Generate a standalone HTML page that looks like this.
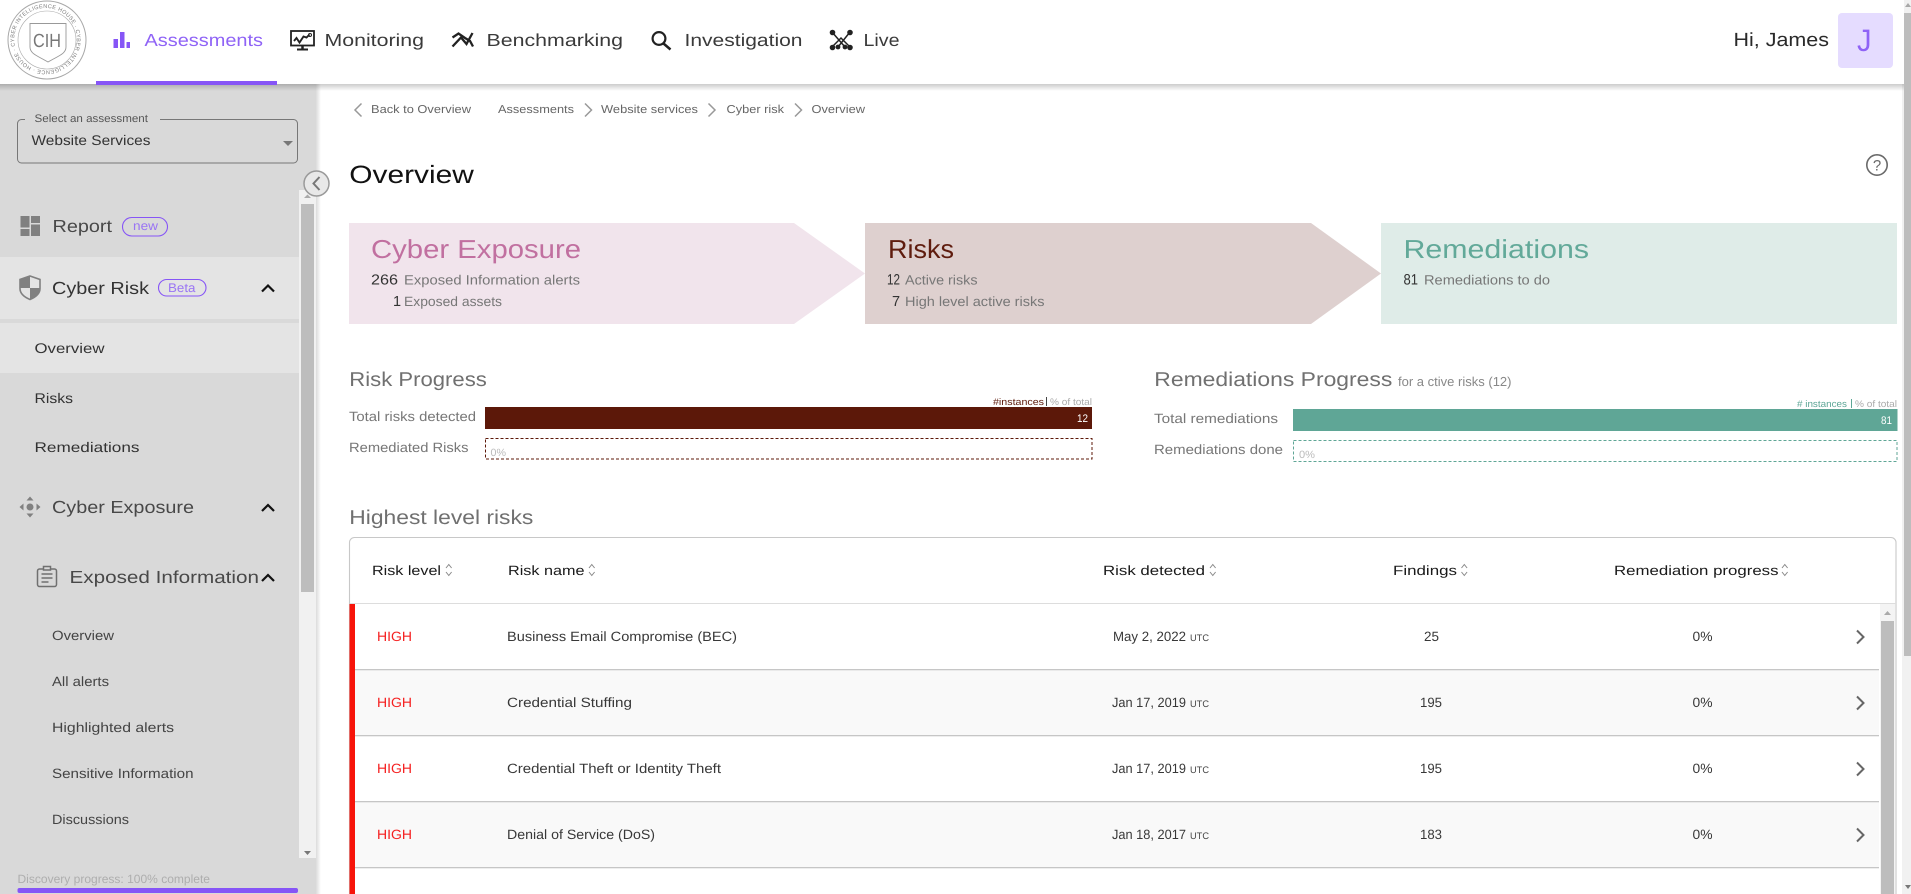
<!DOCTYPE html>
<html lang="en">
<head>
<meta charset="utf-8">
<title>Overview</title>
<style>
html,body{margin:0;padding:0;width:1911px;height:894px;overflow:hidden;background:#fff}
svg{display:block}
text{font-family:"Liberation Sans",Arial,sans-serif;text-rendering:geometricPrecision}
</style>
</head>
<body>
<svg xmlns="http://www.w3.org/2000/svg" width="1911" height="894" viewBox="0 0 1911 894">
<defs>
<linearGradient id="sh" x1="0" y1="0" x2="0" y2="1"><stop offset="0" stop-color="#000" stop-opacity=".2"/><stop offset="1" stop-color="#000" stop-opacity="0"/></linearGradient>
<linearGradient id="sr" x1="0" y1="0" x2="1" y2="0"><stop offset="0" stop-color="#000" stop-opacity=".14"/><stop offset="1" stop-color="#000" stop-opacity="0"/></linearGradient>
<path id="ring" d="M31.500 67.200A31.300 31.300 0 1 1 31.520 67.210"/>
</defs>

<!-- page scrollbar -->
<rect x="1902" y="0" width="9" height="894" fill="#f1f1f1"/>
<rect x="1904" y="13" width="7" height="643" fill="#bdbdbd"/>
<path d="M1905 7l3-4 3 4z" fill="#a8a8a8"/>
<path d="M1905 885l3 4 3-4z" fill="#777"/>

<!-- main cards -->
<path d="M349 223H794L865 273.500 794 324H349z" fill="#f1e4ec"/>
<path d="M865 223H1311L1381 273.500 1311 324H865z" fill="#ded0cf"/>
<rect x="1381" y="223" width="516" height="101" fill="#dfece8"/>

<!-- breadcrumbs -->
<g fill="none" stroke="#999" stroke-width="1.500">
<path d="M361.500 103.500L355 110l6.500 6.500"/>
<path d="M585 103.500L591.500 110 585 116.500"/>
<path d="M708.500 103.500L715 110 708.500 116.500"/>
<path d="M795 103.500L801.500 110 795 116.500"/>
</g>
<g font-size="11.500" fill="#666">
<text x="371" y="113" textLength="100" lengthAdjust="spacingAndGlyphs">Back to Overview</text>
<text x="498" y="113" textLength="76" lengthAdjust="spacingAndGlyphs">Assessments</text>
<text x="601" y="113" textLength="97" lengthAdjust="spacingAndGlyphs">Website services</text>
<text x="726.500" y="113" textLength="57.500" lengthAdjust="spacingAndGlyphs">Cyber risk</text>
<text x="811.500" y="113" textLength="53.500" lengthAdjust="spacingAndGlyphs">Overview</text>
</g>

<text x="349.300" y="183" font-size="25" fill="#111" textLength="124.500" lengthAdjust="spacingAndGlyphs">Overview</text>

<!-- help -->
<circle cx="1877" cy="165" r="10.200" fill="none" stroke="#6a6a6a" stroke-width="1.600"/>
<text x="1877" y="170.500" font-size="15" fill="#6a6a6a" text-anchor="middle">?</text>

<!-- card text -->
<text x="371" y="258" font-size="26" fill="#c170a0" textLength="210" lengthAdjust="spacingAndGlyphs">Cyber Exposure</text>
<text x="371" y="284.500" font-size="14.500" fill="#333" textLength="27" lengthAdjust="spacingAndGlyphs">266</text>
<text x="404" y="284.500" font-size="13.500" fill="#777" textLength="176" lengthAdjust="spacingAndGlyphs">Exposed Information alerts</text>
<text x="393" y="306" font-size="14.500" fill="#333">1</text>
<text x="404" y="306" font-size="13.500" fill="#777" textLength="98" lengthAdjust="spacingAndGlyphs">Exposed assets</text>

<text x="888" y="258" font-size="26" fill="#5f1c0e" textLength="66" lengthAdjust="spacingAndGlyphs">Risks</text>
<text x="887" y="284.500" font-size="15" fill="#333" textLength="13" lengthAdjust="spacingAndGlyphs">12</text>
<text x="905" y="284.500" font-size="13.500" fill="#777" textLength="72.500" lengthAdjust="spacingAndGlyphs">Active risks</text>
<text x="892" y="306" font-size="14.500" fill="#333">7</text>
<text x="905" y="306" font-size="13.500" fill="#777" textLength="139.500" lengthAdjust="spacingAndGlyphs">High level active risks</text>

<text x="1403.500" y="258" font-size="26" fill="#62a999" textLength="185.500" lengthAdjust="spacingAndGlyphs">Remediations</text>
<text x="1403.500" y="284.500" font-size="15" fill="#333" textLength="14.500" lengthAdjust="spacingAndGlyphs">81</text>
<text x="1424" y="284.500" font-size="13.500" fill="#777" textLength="126" lengthAdjust="spacingAndGlyphs">Remediations to do</text>

<!-- Risk progress -->
<text x="349.300" y="386" font-size="20" fill="#707070" textLength="137.500" lengthAdjust="spacingAndGlyphs">Risk Progress</text>
<text x="993" y="405" font-size="9.500" fill="#5c1809" textLength="51" lengthAdjust="spacingAndGlyphs">#instances</text>
<rect x="1046" y="397" width="1" height="9" fill="#444"/>
<text x="1050" y="405" font-size="9.500" fill="#aaa" textLength="42" lengthAdjust="spacingAndGlyphs">% of total</text>
<rect x="485" y="407" width="607" height="22" fill="#5c1809"/>
<text x="1077" y="422" font-size="11" fill="#fff" textLength="11" lengthAdjust="spacingAndGlyphs">12</text>
<text x="349" y="421" font-size="13.500" fill="#777" textLength="127" lengthAdjust="spacingAndGlyphs">Total risks detected</text>
<text x="349" y="452" font-size="13.500" fill="#777" textLength="119.500" lengthAdjust="spacingAndGlyphs">Remediated Risks</text>
<rect x="485.500" y="438.500" width="606.500" height="20.500" fill="#fff" stroke="#5c1809" stroke-width="1" stroke-dasharray="3 2"/>
<text x="490.500" y="456" font-size="10.500" fill="#bbb" textLength="15.500" lengthAdjust="spacingAndGlyphs">0%</text>

<!-- Remediations progress -->
<text x="1154.300" y="386" font-size="20" fill="#707070" textLength="238" lengthAdjust="spacingAndGlyphs">Remediations Progress</text>
<text x="1398" y="386" font-size="13" fill="#888" textLength="113.500" lengthAdjust="spacingAndGlyphs">for a ctive risks (12)</text>
<text x="1797" y="407" font-size="9.500" fill="#5da696" textLength="50" lengthAdjust="spacingAndGlyphs"># instances</text>
<rect x="1851" y="399" width="1" height="9" fill="#5da696"/>
<text x="1855" y="407" font-size="9.500" fill="#aaa" textLength="42" lengthAdjust="spacingAndGlyphs">% of total</text>
<rect x="1293" y="409" width="604.500" height="22" fill="#5fa696"/>
<text x="1881" y="424" font-size="11" fill="#fff" textLength="11" lengthAdjust="spacingAndGlyphs">81</text>
<text x="1154" y="423" font-size="13.500" fill="#777" textLength="124" lengthAdjust="spacingAndGlyphs">Total remediations</text>
<text x="1154" y="454" font-size="13.500" fill="#777" textLength="129" lengthAdjust="spacingAndGlyphs">Remediations done</text>
<rect x="1293.500" y="440.500" width="603.500" height="21" fill="#fff" stroke="#5fa696" stroke-width="1" stroke-dasharray="3 2"/>
<text x="1299" y="458" font-size="10.500" fill="#bbb" textLength="16" lengthAdjust="spacingAndGlyphs">0%</text>

<!-- Table -->
<text x="349.300" y="524" font-size="20" fill="#707070" textLength="184" lengthAdjust="spacingAndGlyphs">Highest level risks</text>
<path d="M349.500 894V542.500a5 5 0 0 1 5-5H1891a5 5 0 0 1 5 5V894" fill="#fff" stroke="#c8c8c8" stroke-width="1.100"/>
<rect x="350" y="603" width="1546" height="1" fill="#ddd"/>
<rect x="355" y="670" width="1524" height="65" fill="#f9f9f9"/>
<rect x="355" y="802" width="1524" height="65" fill="#f9f9f9"/>
<g fill="#c6c6c6">
<rect x="355" y="669" width="1524" height="1.300"/>
<rect x="355" y="735" width="1524" height="1.300"/>
<rect x="355" y="801" width="1524" height="1.300"/>
<rect x="355" y="867" width="1524" height="1.300"/>
</g>
<rect x="349.500" y="604" width="5.500" height="290" fill="#f7140a"/>
<rect x="1880" y="604" width="15" height="290" fill="#f4f4f4"/>
<rect x="1881" y="621" width="13" height="273" fill="#bdbdbd"/>
<path d="M1884 615l3.500-4 3.500 4z" fill="#aaa"/>

<g font-size="13.500" fill="#1a1a1a">
<text x="372" y="575" textLength="69" lengthAdjust="spacingAndGlyphs">Risk level</text>
<text x="508" y="575" textLength="76.500" lengthAdjust="spacingAndGlyphs">Risk name</text>
<text x="1103" y="575" textLength="102" lengthAdjust="spacingAndGlyphs">Risk detected</text>
<text x="1393" y="575" textLength="64" lengthAdjust="spacingAndGlyphs">Findings</text>
<text x="1614" y="575" textLength="164.500" lengthAdjust="spacingAndGlyphs">Remediation progress</text>
</g>
<g fill="none" stroke="#888" stroke-width="1">
<path d="M446 568l2.800-3.500 2.800 3.500M446 572l2.800 3.500 2.800-3.500"/>
<path d="M589 568l2.800-3.500 2.800 3.500M589 572l2.800 3.500 2.800-3.500"/>
<path d="M1210 568l2.800-3.500 2.800 3.500M1210 572l2.800 3.500 2.800-3.500"/>
<path d="M1461.500 568l2.800-3.500 2.800 3.500M1461.500 572l2.800 3.500 2.800-3.500"/>
<path d="M1782 568l2.800-3.500 2.800 3.500M1782 572l2.800 3.500 2.800-3.500"/>
</g>

<g font-size="13.500" fill="#f52020">
<text x="377" y="641" textLength="35" lengthAdjust="spacingAndGlyphs">HIGH</text>
<text x="377" y="707" textLength="35" lengthAdjust="spacingAndGlyphs">HIGH</text>
<text x="377" y="773" textLength="35" lengthAdjust="spacingAndGlyphs">HIGH</text>
<text x="377" y="839" textLength="35" lengthAdjust="spacingAndGlyphs">HIGH</text>
</g>
<g font-size="13.500" fill="#383838">
<text x="507" y="641" textLength="230" lengthAdjust="spacingAndGlyphs">Business Email Compromise (BEC)</text>
<text x="507" y="707" textLength="125" lengthAdjust="spacingAndGlyphs">Credential Stuffing</text>
<text x="507" y="773" textLength="214" lengthAdjust="spacingAndGlyphs">Credential Theft or Identity Theft</text>
<text x="507" y="839" textLength="148" lengthAdjust="spacingAndGlyphs">Denial of Service (DoS)</text>
<text x="1113" y="641" textLength="73" lengthAdjust="spacingAndGlyphs">May 2, 2022</text>
<text x="1112" y="707" textLength="74" lengthAdjust="spacingAndGlyphs">Jan 17, 2019</text>
<text x="1112" y="773" textLength="74" lengthAdjust="spacingAndGlyphs">Jan 17, 2019</text>
<text x="1112" y="839" textLength="74" lengthAdjust="spacingAndGlyphs">Jan 18, 2017</text>
<text x="1424" y="641" textLength="15" lengthAdjust="spacingAndGlyphs">25</text>
<text x="1420" y="707" textLength="22" lengthAdjust="spacingAndGlyphs">195</text>
<text x="1420" y="773" textLength="22" lengthAdjust="spacingAndGlyphs">195</text>
<text x="1420" y="839" textLength="22" lengthAdjust="spacingAndGlyphs">183</text>
<text x="1692.500" y="641" textLength="20" lengthAdjust="spacingAndGlyphs">0%</text>
<text x="1692.500" y="707" textLength="20" lengthAdjust="spacingAndGlyphs">0%</text>
<text x="1692.500" y="773" textLength="20" lengthAdjust="spacingAndGlyphs">0%</text>
<text x="1692.500" y="839" textLength="20" lengthAdjust="spacingAndGlyphs">0%</text>
</g>
<g font-size="9.500" fill="#444">
<text x="1190" y="641" textLength="19" lengthAdjust="spacingAndGlyphs">UTC</text>
<text x="1190" y="707" textLength="19" lengthAdjust="spacingAndGlyphs">UTC</text>
<text x="1190" y="773" textLength="19" lengthAdjust="spacingAndGlyphs">UTC</text>
<text x="1190" y="839" textLength="19" lengthAdjust="spacingAndGlyphs">UTC</text>
</g>
<g fill="none" stroke="#666" stroke-width="2">
<path d="M1857 630.500L1863.500 637 1857 643.500"/>
<path d="M1857 696.500L1863.500 703 1857 709.500"/>
<path d="M1857 762.500L1863.500 769 1857 775.500"/>
<path d="M1857 828.500L1863.500 835 1857 841.500"/>
</g>

<!-- sidebar -->
<rect x="316" y="84" width="5" height="810" fill="url(#sr)"/>
<rect x="0" y="84" width="316" height="810" fill="#d9d9d9"/>
<rect x="0" y="257" width="299" height="62" fill="#e4e4e4"/>
<rect x="0" y="323" width="299" height="50" fill="#e4e4e4"/>
<rect x="299" y="190" width="17" height="668" fill="#f1f1f1"/>
<rect x="301" y="204" width="13" height="388" fill="#bdbdbd"/>
<path d="M304 198l3.500-3.500 3.500 3.500z" fill="#aaa"/>
<path d="M304 851l3.500 4 3.500-4z" fill="#777"/>

<!-- select -->
<rect x="17.500" y="119.500" width="280" height="43.500" rx="4" fill="none" stroke="#777" stroke-width="1"/>
<rect x="25" y="115" width="135" height="8" fill="#d9d9d9"/>
<text x="34.500" y="122" font-size="11" fill="#555" textLength="113.500" lengthAdjust="spacingAndGlyphs">Select an assessment</text>
<text x="31.500" y="145" font-size="14" fill="#333" textLength="119" lengthAdjust="spacingAndGlyphs">Website Services</text>
<path d="M283 141h10l-5 5z" fill="#777"/>

<!-- Report -->
<g fill="#808080">
<rect x="20.500" y="216" width="9" height="11.500"/><rect x="31" y="216" width="9" height="7"/>
<rect x="20.500" y="229" width="9" height="7"/><rect x="31" y="224.500" width="9" height="11.500"/>
</g>
<text x="52.500" y="232" font-size="17.500" fill="#484848" textLength="59.500" lengthAdjust="spacingAndGlyphs">Report</text>
<rect x="122.500" y="217.500" width="45" height="18.500" rx="9.250" fill="none" stroke="#8655f6" stroke-width="1.100"/>
<text x="133" y="230" font-size="12.500" fill="#9a74f4" textLength="25" lengthAdjust="spacingAndGlyphs">new</text>

<!-- Cyber risk -->
<path d="M30 276l10 3.500v9c0 5-4 8.500-10 11-6-2.500-10-6-10-11v-9z" fill="none" stroke="#808080" stroke-width="1.600"/>
<path d="M30 276v12h-10v-8.500zM30 288h10c0 5-4 8.500-10 11z" fill="#808080"/>
<text x="52" y="294" font-size="17.500" fill="#333" textLength="97" lengthAdjust="spacingAndGlyphs">Cyber Risk</text>
<rect x="158.500" y="279.500" width="47.500" height="16.500" rx="8.250" fill="none" stroke="#8655f6" stroke-width="1.100"/>
<text x="168" y="292" font-size="12.500" fill="#9a74f4" textLength="27.500" lengthAdjust="spacingAndGlyphs">Beta</text>
<path d="M262 291.500L268 285.500 274 291.500" fill="none" stroke="#111" stroke-width="2.200"/>

<g font-size="14" fill="#333">
<text x="34.500" y="353" textLength="70" lengthAdjust="spacingAndGlyphs">Overview</text>
<text x="34.500" y="403" textLength="38.500" lengthAdjust="spacingAndGlyphs">Risks</text>
<text x="34.500" y="452" textLength="105" lengthAdjust="spacingAndGlyphs">Remediations</text>
</g>

<!-- Cyber exposure -->
<g fill="#808080">
<circle cx="30" cy="507" r="3.500"/>
<path d="M30 496.500l3.500 4h-7zM30 517.500l3.500-4h-7zM19.500 507l4-3.500v7zM40.500 507l-4-3.500v7z"/>
</g>
<text x="52" y="513" font-size="17.500" fill="#484848" textLength="142" lengthAdjust="spacingAndGlyphs">Cyber Exposure</text>
<path d="M262 511L268 505 274 511" fill="none" stroke="#111" stroke-width="2.200"/>

<!-- Exposed information -->
<g fill="none" stroke="#707070" stroke-width="1.500">
<rect x="37.500" y="569" width="19" height="17.500" rx="2"/>
<rect x="43.500" y="566.500" width="7" height="3.500" fill="#d9d9d9"/>
<path d="M41.500 574h11M41.500 578h11M41.500 582h7"/>
</g>
<text x="69.500" y="583" font-size="17.500" fill="#484848" textLength="189.500" lengthAdjust="spacingAndGlyphs">Exposed Information</text>
<path d="M262 581L268 575 274 581" fill="none" stroke="#111" stroke-width="2.200"/>

<g font-size="13.500" fill="#444">
<text x="52" y="640" textLength="62" lengthAdjust="spacingAndGlyphs">Overview</text>
<text x="52" y="686" textLength="57" lengthAdjust="spacingAndGlyphs">All alerts</text>
<text x="52" y="732" textLength="122" lengthAdjust="spacingAndGlyphs">Highlighted alerts</text>
<text x="52" y="778" textLength="141.500" lengthAdjust="spacingAndGlyphs">Sensitive Information</text>
<text x="52" y="824" textLength="77" lengthAdjust="spacingAndGlyphs">Discussions</text>
</g>
<text x="17.500" y="883" font-size="12" fill="#aeaeae" textLength="192.500" lengthAdjust="spacingAndGlyphs">Discovery progress: 100% complete</text>
<rect x="17.500" y="888" width="280.500" height="5" rx="2" fill="#8655f6"/>

<!-- collapse -->
<circle cx="316.500" cy="183.500" r="12.500" fill="#e8e8e8" stroke="#9a9a9a" stroke-width="1.500"/>
<path d="M319.500 177L313.500 183.500 319.500 190" fill="none" stroke="#777" stroke-width="2"/>

<!-- header -->
<rect x="0" y="84" width="1904" height="7" fill="url(#sh)"/>
<rect x="0" y="0" width="1904" height="84" fill="#fff"/>
<rect x="96" y="81" width="181" height="4" fill="#8655f6"/>

<!-- logo -->
<g fill="none" stroke="#a8a8a8">
<circle cx="47" cy="40" r="39" stroke-width="1"/>
<circle cx="47" cy="40" r="29" stroke-width=".6"/>
<path d="M30 23.500H66V47C66 54 58 56 48 62 38 56 30 54 30 47z" stroke="#999" stroke-width=".9"/>
</g>
<text font-size="5.500" fill="#7a7a7a" letter-spacing=".35"><textPath href="#ring" startOffset="0">HOUSE · CYBER INTELLIGENCE HOUSE · CYBER INTELLIGENCE ·</textPath></text>
<text x="33" y="47" font-size="19" fill="#777" textLength="28" lengthAdjust="spacingAndGlyphs">CIH</text>

<!-- nav icons -->
<g fill="#8655f6">
<rect x="113.500" y="39" width="4.500" height="9"/>
<rect x="120" y="32" width="4.500" height="16"/>
<rect x="126.500" y="42" width="3.500" height="6"/>
</g>
<g fill="none" stroke="#222">
<rect x="291" y="31" width="23" height="14.500" stroke-width="1.800"/>
<path d="M294 41l2.500-3 3 4.500 4-6 3 1 3-3" stroke-width="1.900"/>
<circle cx="310" cy="35" r="1.500" stroke-width="1"/>
<path d="M302.500 46v2.500" stroke-width="2.500"/>
<path d="M297 49.500h11" stroke-width="2"/>
<path d="M452.500 37.500L458.500 33.500 465 38 470 41 473 46.500" stroke-width="2.300"/>
<path d="M452.500 46.500L461 37.500 466.500 44 472.500 33" stroke-width="2.300"/>
<circle cx="659" cy="38.500" r="6.400" stroke-width="2.200"/>
<path d="M663.500 43.500l7 6" stroke-width="2.500"/>
<path d="M832 32L845 47M850 32L838 47M832 47L841 38 850 47" stroke-width="1.500"/>
</g>
<g fill="#222">
<circle cx="832.500" cy="32.500" r="2.800"/><circle cx="850" cy="32.500" r="2.800"/>
<circle cx="832.500" cy="47.500" r="2.800"/><circle cx="850" cy="47.500" r="2.800"/>
<circle cx="838" cy="47" r="2.400"/><circle cx="845" cy="47" r="2.400"/>
</g>

<!-- nav text -->
<text x="144.500" y="46" font-size="17.500" fill="#8f63f6" textLength="118.500" lengthAdjust="spacingAndGlyphs">Assessments</text>
<g font-size="17.500" fill="#3a3a3a">
<text x="324.500" y="46" textLength="99.500" lengthAdjust="spacingAndGlyphs">Monitoring</text>
<text x="486.500" y="46" textLength="136.500" lengthAdjust="spacingAndGlyphs">Benchmarking</text>
<text x="684.500" y="46" textLength="118" lengthAdjust="spacingAndGlyphs">Investigation</text>
<text x="863.500" y="46" textLength="36" lengthAdjust="spacingAndGlyphs">Live</text>
</g>
<text x="1733.500" y="46" font-size="19" fill="#2a2a2a" textLength="95.500" lengthAdjust="spacingAndGlyphs">Hi, James</text>
<rect x="1838" y="13" width="55" height="55" rx="4" fill="#e5dcff"/>
<text x="1857" y="51" font-size="31" fill="#8f63f6" textLength="14.500" lengthAdjust="spacingAndGlyphs">J</text>
</svg>
</body>
</html>
